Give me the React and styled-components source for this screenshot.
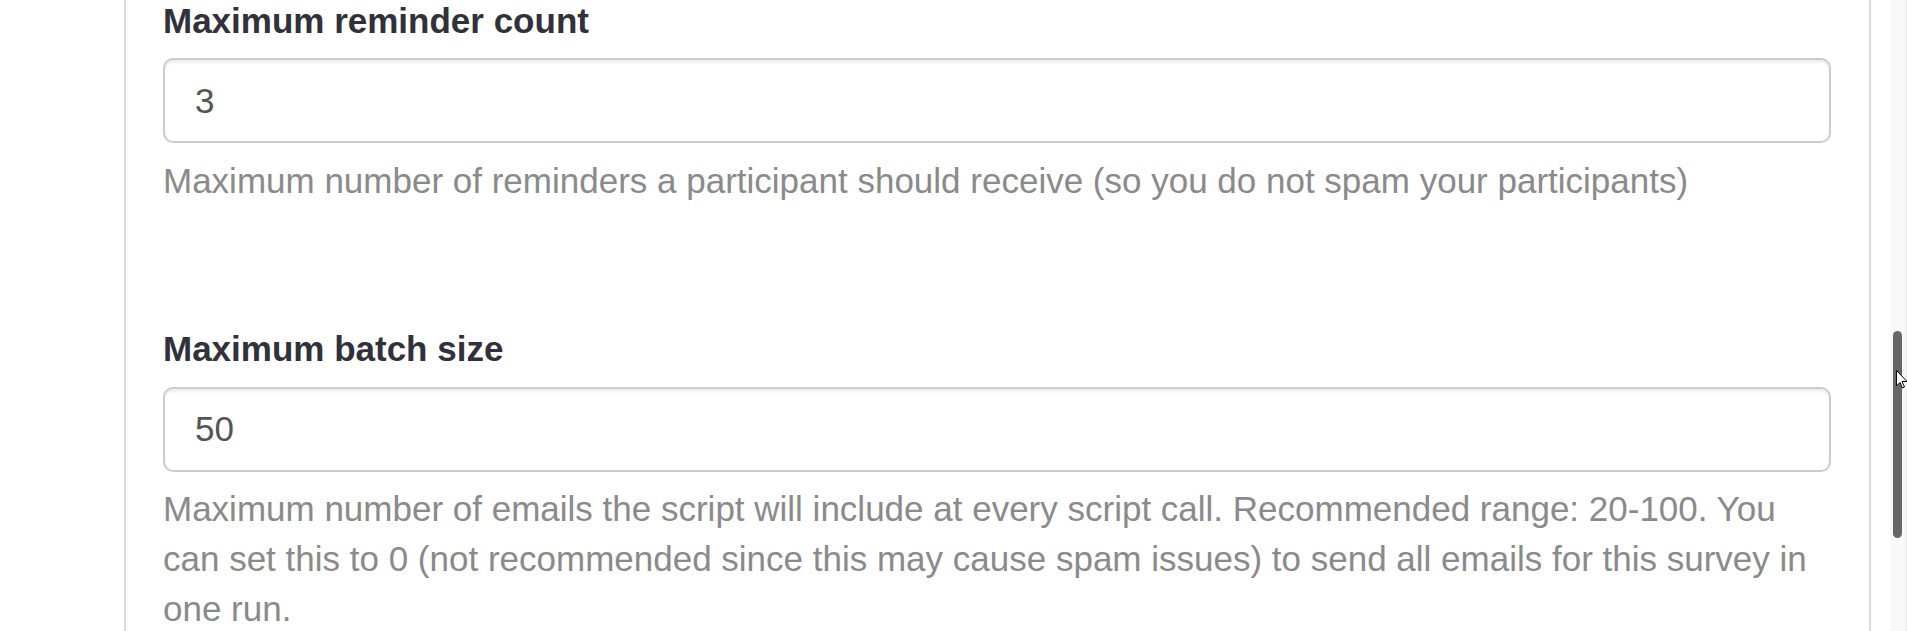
import React from "react";
import styled, { createGlobalStyle } from "styled-components";

const GlobalStyle = createGlobalStyle`
  html, body {
    margin: 0;
    padding: 0;
    height: 631px;
    overflow: hidden;
    background: #ffffff;
  }
  body {
    font-family: "Liberation Sans", Arial, Helvetica, sans-serif;
    font-size: 35px;
    line-height: 50px;
    color: #333;
  }
  * { box-sizing: border-box; }
`;

const Page = styled.div`
  display: flex;
  width: 1907px;
  height: 631px;
  position: relative;
  overflow: hidden;
`;

const Main = styled.main`
  flex: 1;
  min-width: 0;
  height: 100%;
  overflow: hidden;
`;

const Panel = styled.section`
  margin: -4.5px 19.5px 0 123.5px;
  min-height: 700px;
  padding: 0 37.5px;
  border-left: 2.5px solid #dcdcdc;
  border-right: 2.5px solid #dcdcdc;
  background: #fff;
`;

const FormGroup = styled.div`
  margin-bottom: ${(p) => p.$after}px;
`;

const Label = styled.label`
  display: inline-block;
  max-width: 100%;
  margin-bottom: 12.5px;
  font-weight: 700;
  color: #31313b;
`;

const Input = styled.input`
  display: block;
  width: 100%;
  height: 85px;
  padding: 15px 30px;
  font-family: inherit;
  font-size: 35px;
  line-height: 50px;
  color: #555;
  background: #fff;
  border: 2.5px solid #cccccc;
  border-radius: 10px;
  box-shadow: inset 0 2.5px 2.5px rgba(0, 0, 0, 0.075);
  outline: none;
`;

const Help = styled.p`
  display: block;
  margin: 12.5px 0 25px;
  color: #8a8a8a;
`;

const Track = styled.div`
  width: 17px;
  height: 100%;
  background: #f9f9f9;
  border-right: 2px solid #efefef;
  padding-left: 3px;
  padding-top: 331px;
`;

const Thumb = styled.div`
  width: 8.5px;
  height: 207px;
  border-radius: 5px;
  background: #676767;
`;

const Cursor = styled.svg`
  position: absolute;
  left: 1896px;
  top: 370px;
  width: 12px;
  height: 19px;
  pointer-events: none;
`;

function Field({ label, value, help, after }) {
  return (
    <FormGroup $after={after}>
      <Label>{label}</Label>
      <Input type="text" defaultValue={value} />
      <Help>{help}</Help>
    </FormGroup>
  );
}

export default function App() {
  return (
    <>
      <GlobalStyle />
      <Page>
        <Main>
          <Panel>
            <Field
              label="Maximum reminder count"
              value="3"
              help="Maximum number of reminders a participant should receive (so you do not spam your participants)"
              after={118.5}
            />
            <Field
              label="Maximum batch size"
              value="50"
              help="Maximum number of emails the script will include at every script call. Recommended range: 20-100. You can set this to 0 (not recommended since this may cause spam issues) to send all emails for this survey in one run."
              after={37.5}
            />
          </Panel>
        </Main>
        <Track>
          <Thumb />
        </Track>
        <Cursor viewBox="0 0 12 19">
          <path
            d="M0.5 0.5 L0.5 16 L4 12.5 L6.5 18 L8.5 17 L6 11.5 L11 11.5 Z"
            fill="#fff"
            stroke="#000"
            strokeWidth="1"
            strokeLinejoin="round"
          />
        </Cursor>
      </Page>
    </>
  );
}
